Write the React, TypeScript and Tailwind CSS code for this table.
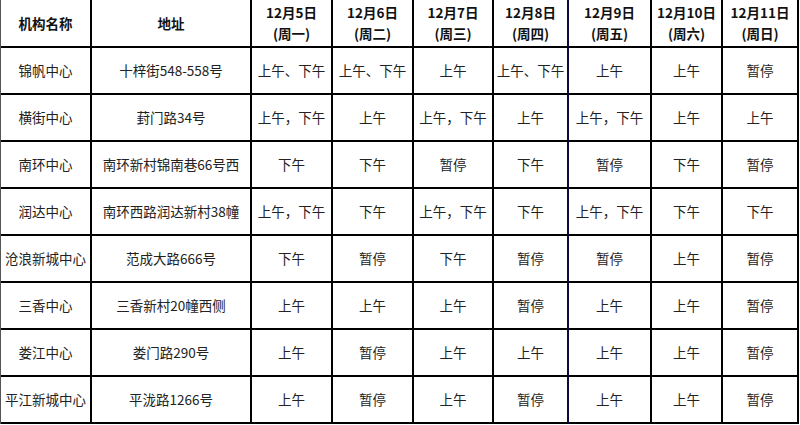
import React from 'react';

const days = [
  ['12月5日', '(周一)'],
  ['12月6日', '(周二)'],
  ['12月7日', '(周三)'],
  ['12月8日', '(周四)'],
  ['12月9日', '(周五)'],
  ['12月10日', '(周六)'],
  ['12月11日', '(周日)'],
];

const rows: string[][] = [
  ['锦帆中心', '十梓街548-558号', '上午、下午', '上午、下午', '上午', '上午、下午', '上午', '上午', '暂停'],
  ['横街中心', '葑门路34号', '上午，下午', '上午', '上午，下午', '上午', '上午，下午', '上午', '上午'],
  ['南环中心', '南环新村锦南巷66号西', '下午', '下午', '暂停', '下午', '暂停', '下午', '暂停'],
  ['润达中心', '南环西路润达新村38幢', '上午，下午', '下午', '上午，下午', '下午', '上午，下午', '下午', '下午'],
  ['沧浪新城中心', '范成大路666号', '下午', '暂停', '下午', '暂停', '暂停', '上午', '暂停'],
  ['三香中心', '三香新村20幢西侧', '上午', '上午', '上午', '暂停', '上午', '上午', '暂停'],
  ['娄江中心', '娄门路290号', '上午', '暂停', '上午', '上午', '上午', '上午', '暂停'],
  ['平江新城中心', '平泷路1266号', '上午', '暂停', '上午', '暂停', '上午', '上午', '暂停'],
];

// column 6 (12月8日) has a navy right rule in the original
const cellBorder = (col: number) =>
  col === 5 ? 'border-r-2 border-b-2 border-r-[#0a0a3c] border-b-black' : 'border-r-2 border-b-2 border-black';

export default function App() {
  return (
    <div
      className="w-[800px] h-[425px] bg-white overflow-hidden"
      style={{ fontFamily: '"Noto Sans CJK SC", "Noto Sans", sans-serif' }}
    >
      <div className="grid grid-cols-[91px_160px_81px_81px_80px_75px_83px_71px_76px] grid-rows-[48px_repeat(8,47px)] border-l border-[#555] w-[799px]">
        <div className={`${cellBorder(0)} flex items-center justify-center text-[13.5px] font-bold text-[#111]`}>机构名称</div>
        <div className={`${cellBorder(1)} flex items-center justify-center text-[13.5px] font-bold text-[#111]`}>地址</div>
        {days.map((d, i) => (
          <div
            key={d[0]}
            className={`${cellBorder(i + 2)} flex flex-col items-center justify-center text-[13.5px] font-bold text-[#111] leading-[21px] whitespace-nowrap`}
          >
            <span>{d[0]}</span>
            <span>{d[1]}</span>
          </div>
        ))}
        {rows.map((r, ri) =>
          r.map((c, ci) => (
            <div
              key={`${ri}-${ci}`}
              className={`${cellBorder(ci)} flex items-center justify-center text-[13.5px] text-[#222] whitespace-nowrap overflow-hidden`}
            >
              {c}
            </div>
          ))
        )}
      </div>
    </div>
  );
}
